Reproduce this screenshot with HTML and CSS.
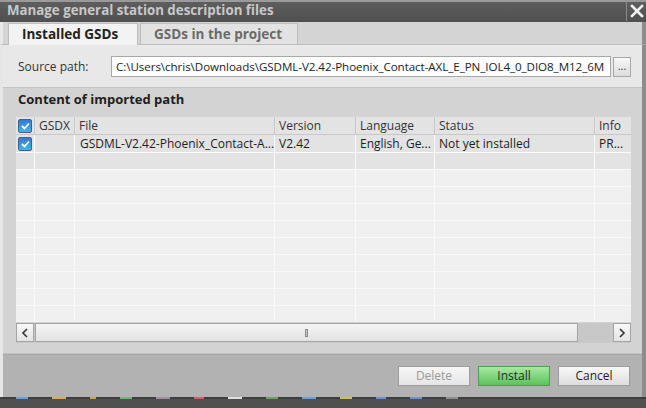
FILE: index.html
```html
<!DOCTYPE html>
<html>
<head>
<meta charset="utf-8">
<link rel="stylesheet" href="styles.css">
</head>
<body>
<div class="window">
  <div class="titlebar">
    <div class="title">Manage general station description files</div>
    <div class="close">
      <svg width="14" height="14" viewBox="0 0 14 14"><path d="M2 2 L12 12 M12 2 L2 12" stroke="#f2f2f2" stroke-width="2.6" stroke-linecap="square"/></svg>
    </div>
  </div>
  <div class="tabstrip">
    <div class="tab active">Installed GSDs</div>
    <div class="tab">GSDs in the project</div>
  </div>
  <div class="body">
    <div class="source">
      <span class="src-label">Source path:</span>
      <div class="src-input">C:\Users\chris\Downloads\GSDML-V2.42-Phoenix_Contact-AXL_E_PN_IOL4_0_DIO8_M12_6M</div>
      <div class="browse">...</div>
    </div>
    <div class="section-head">Content of imported path</div>
    <div class="section">
      <div class="table">
        <div class="row head">
          <div class="c c0"><span class="cb"><svg width="9" height="8" viewBox="0 0 9 8"><path d="M1 4 L3.5 6.5 L8 1.5" fill="none" stroke="#fff" stroke-width="1.8"/></svg></span></div>
          <div class="c c1">GSDX</div>
          <div class="c c2">File</div>
          <div class="c c3">Version</div>
          <div class="c c4">Language</div>
          <div class="c c5">Status</div>
          <div class="c c6">Info</div>
        </div>
        <div class="row data">
          <div class="c c0"><span class="cb"><svg width="9" height="8" viewBox="0 0 9 8"><path d="M1 4 L3.5 6.5 L8 1.5" fill="none" stroke="#fff" stroke-width="1.8"/></svg></span></div>
          <div class="c c1"></div>
          <div class="c c2 pad">GSDML-V2.42-Phoenix_Contact-A...</div>
          <div class="c c3">V2.42</div>
          <div class="c c4">English, Ge...</div>
          <div class="c c5">Not yet installed</div>
          <div class="c c6">PR...</div>
        </div>
        <div class="row alt"><div class="c c0"></div><div class="c c1"></div><div class="c c2"></div><div class="c c3"></div><div class="c c4"></div><div class="c c5"></div><div class="c c6"></div></div>
        <div class="row"><div class="c c0"></div><div class="c c1"></div><div class="c c2"></div><div class="c c3"></div><div class="c c4"></div><div class="c c5"></div><div class="c c6"></div></div>
        <div class="row"><div class="c c0"></div><div class="c c1"></div><div class="c c2"></div><div class="c c3"></div><div class="c c4"></div><div class="c c5"></div><div class="c c6"></div></div>
        <div class="row"><div class="c c0"></div><div class="c c1"></div><div class="c c2"></div><div class="c c3"></div><div class="c c4"></div><div class="c c5"></div><div class="c c6"></div></div>
        <div class="row"><div class="c c0"></div><div class="c c1"></div><div class="c c2"></div><div class="c c3"></div><div class="c c4"></div><div class="c c5"></div><div class="c c6"></div></div>
        <div class="row"><div class="c c0"></div><div class="c c1"></div><div class="c c2"></div><div class="c c3"></div><div class="c c4"></div><div class="c c5"></div><div class="c c6"></div></div>
        <div class="row"><div class="c c0"></div><div class="c c1"></div><div class="c c2"></div><div class="c c3"></div><div class="c c4"></div><div class="c c5"></div><div class="c c6"></div></div>
        <div class="row"><div class="c c0"></div><div class="c c1"></div><div class="c c2"></div><div class="c c3"></div><div class="c c4"></div><div class="c c5"></div><div class="c c6"></div></div>
        <div class="row"><div class="c c0"></div><div class="c c1"></div><div class="c c2"></div><div class="c c3"></div><div class="c c4"></div><div class="c c5"></div><div class="c c6"></div></div>
        <div class="row last"><div class="c c0"></div><div class="c c1"></div><div class="c c2"></div><div class="c c3"></div><div class="c c4"></div><div class="c c5"></div><div class="c c6"></div></div>
      </div>
      <div class="hscroll">
        <div class="sbtn"><svg width="8" height="10" viewBox="0 0 8 10"><path d="M6 1 L2 5 L6 9" fill="none" stroke="#333" stroke-width="1.6"/></svg></div>
        <div class="track"><span class="grip"></span></div>
        <div class="gap"></div>
        <div class="sbtn"><svg width="8" height="10" viewBox="0 0 8 10"><path d="M2 1 L6 5 L2 9" fill="none" stroke="#333" stroke-width="1.6"/></svg></div>
      </div>
    </div>
    <div class="buttons">
      <div class="btn disabled">Delete</div>
      <div class="btn primary">Install</div>
      <div class="btn">Cancel</div>
    </div>
  </div>
  <div class="taskbar">
    <span class="dash" style="width:12px;background:#6aa3d6"></span>
    <span class="dash" style="width:14px;background:#d0b060"></span>
    <span class="dash" style="width:6px;background:#c8a848"></span>
    <span class="dash" style="width:12px;background:#78b078"></span>
    <span class="dash" style="width:14px;background:#a090a0"></span>
    <span class="dash" style="width:10px;background:#d06070"></span>
    <span class="dash" style="width:14px;background:#e0e0e0"></span>
    <span class="dash" style="width:12px;background:#68a068"></span>
    <span class="dash" style="width:14px;background:#6aa3d6"></span>
    <span class="dash" style="width:12px;background:#c8c060"></span>
    <span class="dash" style="width:10px;background:#7090c8"></span>
    <span class="dash" style="width:12px;background:#7090c8"></span>
    <span class="dash" style="width:12px;background:#909090"></span>
  </div>
</div>
</body>
</html>
```
FILE: styles.css
```css
* { box-sizing: border-box; }
html, body { margin: 0; padding: 0; }
body {
  width: 646px;
  height: 408px;
  overflow: hidden;
  background: #4c4c4c;
  font-family: "Open Sans", "Noto Sans", sans-serif;
  font-size: 12px;
  color: #1e1e1e;
}
.window {
  width: 646px;
  height: 408px;
  display: flex;
  flex-direction: column;
}
.titlebar {
  height: 22px;
  flex: none;
  background: linear-gradient(#5e5e5e, #4f4f4f);
  border-top: 2px solid #9a9a9a;
  display: flex;
  align-items: center;
  justify-content: space-between;
}
.title {
  padding-left: 7px;
  font-weight: bold;
  font-size: 13.3px;
  color: #c8c8c8;
  line-height: 18px;
  margin-top: -4px;
}
.close {
  width: 20px;
  height: 20px;
  border-left: 1px solid #8a8a8a;
  display: flex;
  align-items: center;
  justify-content: center;
  margin-top: -2px;
}
.tabstrip {
  height: 23px;
  flex: none;
  background: #d4d4d4;
  border-left: 3px solid #e8e8e8;
  border-right: 4px solid #8c8c8c;
  display: flex;
  align-items: flex-end;
  padding-left: 5px;
  gap: 2px;
  border-bottom: 1px solid #bcbcbc;
}
.tab {
  height: 21px;
  padding: 0 13px;
  font-weight: bold;
  font-size: 13.5px;
  line-height: 20px;
  color: #6a6a6a;
  background: #e2e2e2;
  border: 1px solid #bdbdbd;
  border-bottom: none;
  width: 158px;
}
.tab.active {
  width: 130px;
  color: #222;
  background: #f3f3f3;
  height: 22px;
  margin-bottom: -1px;
}
.body {
  flex: 1;
  display: flex;
  flex-direction: column;
  border-left: 3px solid #e6e6e6;
  border-right: 4px solid #8c8c8c;
  box-shadow: inset 1px 0 0 #9c9c9c;
}
.source {
  height: 42px;
  flex: none;
  background: #e8e8e8;
  display: flex;
  align-items: center;
  padding-left: 15px;
  padding-top: 1px;
}
.src-label {
  width: 93px;
  color: #333;
}
.src-input {
  width: 500px;
  height: 21px;
  background: #fff;
  border: 1px solid #a8a8a8;
  line-height: 19px;
  padding-left: 4px;
  white-space: nowrap;
  overflow: hidden;
  font-size: 11.6px;
  letter-spacing: -0.06px;
  color: #222;
}
.browse {
  width: 18px;
  height: 20px;
  margin-left: 2px;
  border: 1px solid #a8a8a8;
  background: linear-gradient(#f8f8f8, #dcdcdc);
  font-size: 11px;
  line-height: 16px;
  text-align: center;
  color: #333;
}
.section-head {
  height: 23px;
  flex: none;
  background: #d3d3d3;
  border-top: 1px solid #c4c4c4;
  font-weight: bold;
  font-size: 13px;
  line-height: 22px;
  padding-left: 15px;
  color: #1e1e1e;
}
.section {
  flex: none;
  background: #d3d3d3;
  padding: 7px 11px 10px 13px;
  border-bottom: 1px solid #c4c4c4;
}
.table {
  background: #f0f0f0;
  display: flex;
  flex-direction: column;
}
.row {
  display: flex;
  height: 17px;
  border-bottom: 1px solid #fafafa;
}
.row.head {
  height: 18px;
  background: #e3e3e3;
  border-bottom: 1px solid #c8c8c8;
  color: #333;
}
.row.data {
  height: 18px;
  background: #e3e3e3;
  border-bottom: 1px solid #fafafa;
}
.row.alt { background: #e3e3e3; }
.row.last { height: 16px; border-bottom: none; }
.c {
  border-right: 1px solid #fafafa;
  padding-left: 4px;
  line-height: 17px;
  white-space: nowrap;
  overflow: hidden;
}
.head .c { border-right-color: #c8c8c8; }
.c0 { width: 19px; padding-left: 2px; display: flex; align-items: center; }
.c1 { width: 40px; }
.c2 { width: 200px; }
.c2.pad { padding-left: 5px; }
.c3 { width: 81px; }
.c4 { width: 79px; }
.c5 { width: 160px; }
.c6 { flex: 1; border-right: none; }
.cb {
  width: 14px;
  height: 14px;
  border-radius: 2px;
  border: 1px solid #4a5f88;
  background: linear-gradient(#3a78d4, #38b8e8);
  display: flex;
  align-items: center;
  justify-content: center;
}
.hscroll {
  height: 20px;
  margin-top: 1px;
  display: flex;
  background: #c8c8c8;
}
.sbtn {
  width: 18px;
  height: 19px;
  border: 1px solid #a4a4a4;
  background: linear-gradient(#f8f8f8, #e4e4e4);
  display: flex;
  align-items: center;
  justify-content: center;
}
.track {
  width: 543px;
  height: 19px;
  margin-left: 1px;
  border: 1px solid #a4a4a4;
  background: linear-gradient(#f4f4f4, #e2e2e2);
  display: flex;
  align-items: center;
  justify-content: center;
}
.grip {
  width: 3px;
  height: 8px;
  border: 1px solid #8a8a8a;
  background: #c8c8c8;
}
.gap { flex: 1; }
.buttons {
  flex: 1;
  background: #b2b2b2;
  display: flex;
  justify-content: flex-end;
  align-items: flex-start;
  gap: 8px;
  padding: 11px 12px 0 0;
  border-top: 1px solid #a8a8a8;
}
.btn {
  width: 72px;
  height: 20px;
  border: 1px solid #9c9c9c;
  background: linear-gradient(#f8f8f8, #dedede);
  text-align: center;
  line-height: 18px;
  font-size: 12px;
  color: #222;
}
.btn.disabled { color: #9a9a9a; background: linear-gradient(#f6f6f6, #e6e6e6); }
.btn.primary {
  border-color: #4ba04b;
  background: linear-gradient(#a8e8a0, #5cc25c);
  color: #1e2e1e;
}
.taskbar {
  height: 11px;
  flex: none;
  background: #505050;
  border-top: 2px solid #3e3e3e;
  display: flex;
  gap: 24px;
  padding-left: 16px;
  align-items: flex-start;
}
.dash { height: 2px; display: block; margin-top: -2px; }
```
